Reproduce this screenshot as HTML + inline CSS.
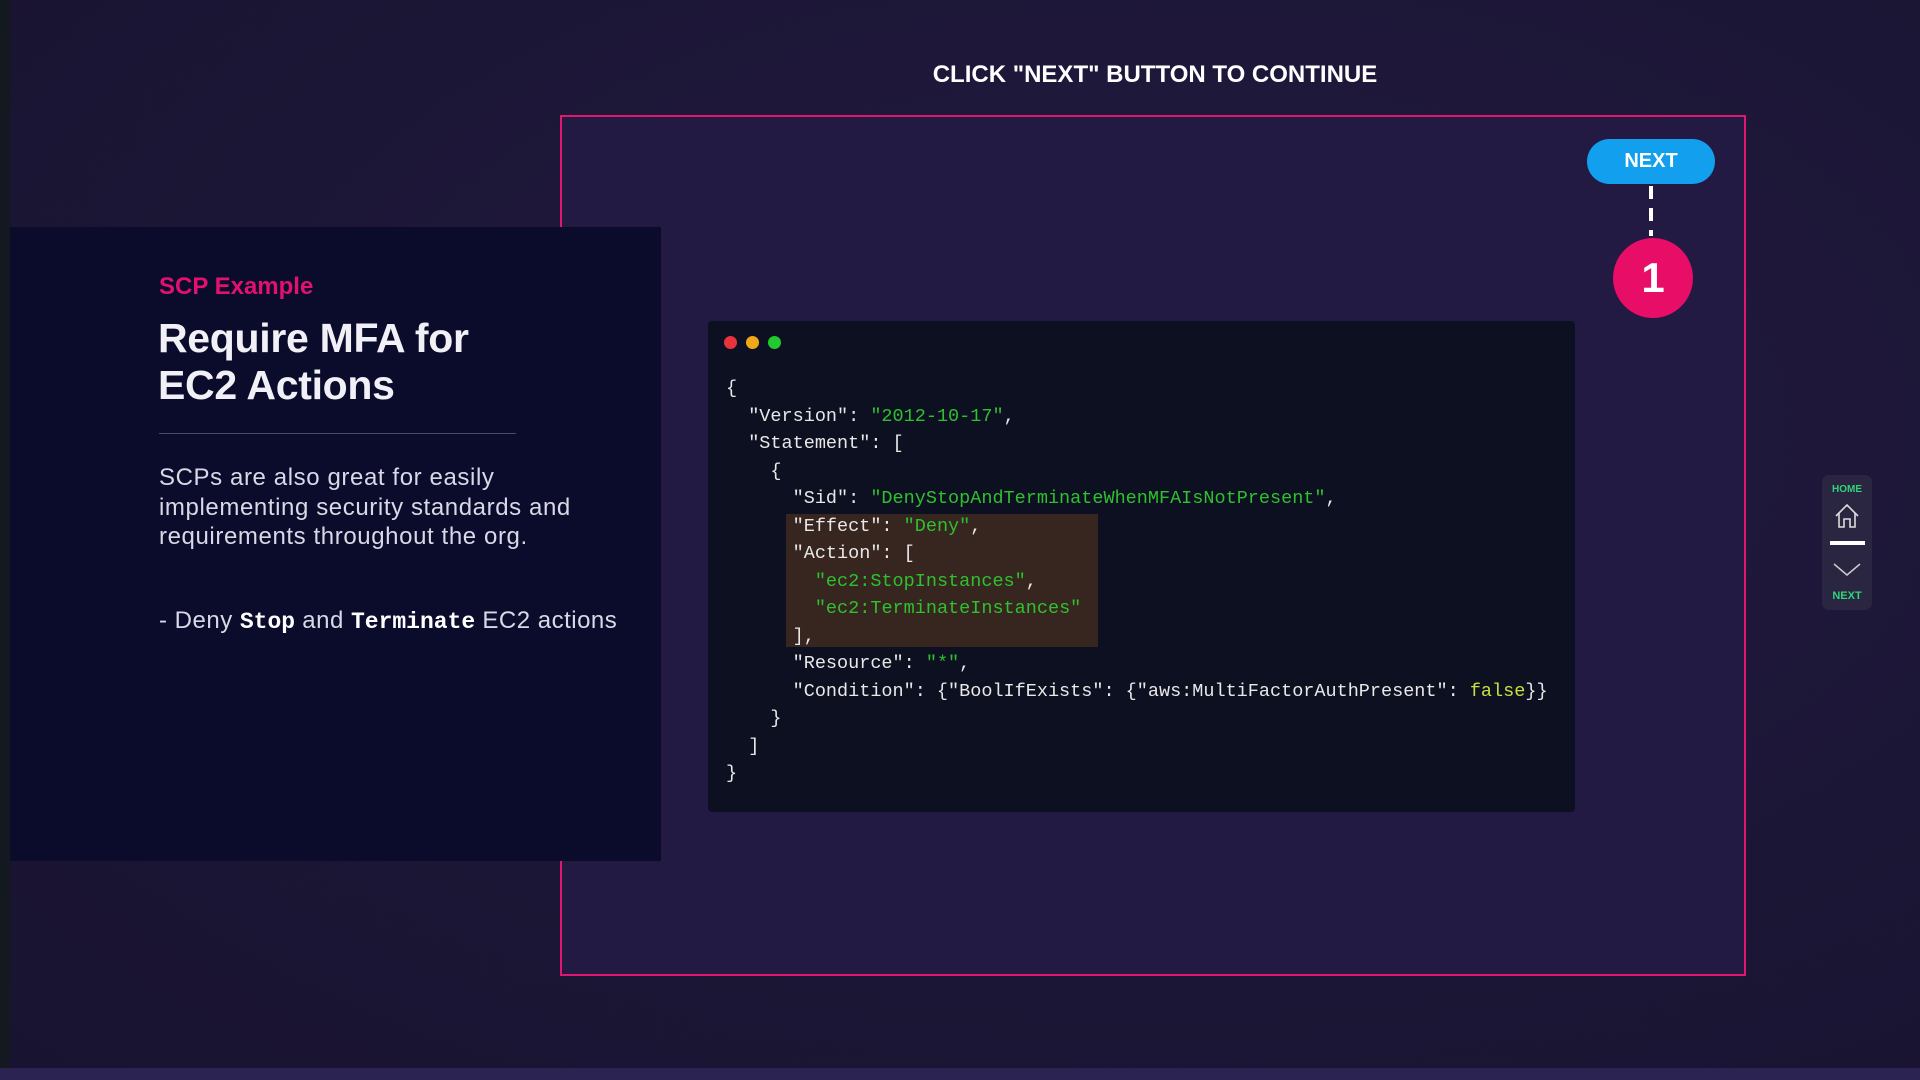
<!DOCTYPE html>
<html><head><meta charset="utf-8"><style>
*{margin:0;padding:0;box-sizing:border-box}
body{width:1920px;height:1080px;overflow:hidden;background:radial-gradient(ellipse at 60% 40%,#221a42 0%,#1c1636 60%,#181330 100%);font-family:"Liberation Sans",sans-serif;position:relative}
.abs{position:absolute}
.mono{font-family:"Liberation Mono",monospace}
.code div{height:27.5px;line-height:27.5px;white-space:pre}
.g{color:#2fc02f}
.y{color:#c8e040}
</style></head><body>
<div class="abs" style="left:0;top:0;width:10px;height:1080px;background:#141820"></div>
<div class="abs" style="left:0;top:1068px;width:1920px;height:12px;background:#2b2452"></div>
<div class="abs" style="left:0;top:61px;width:2310px;text-align:center;font-weight:bold;font-size:24px;color:#fff;letter-spacing:0px">CLICK "NEXT" BUTTON TO CONTINUE</div>
<div class="abs" style="left:560px;top:115px;width:1186px;height:861px;border:2px solid #e0166f;background:#221a42"></div>
<div class="abs" style="left:10px;top:227px;width:651px;height:634px;background:#0b0b2c"></div>
<div class="abs" style="left:159px;top:273px;font-size:24px;font-weight:bold;color:#e2106e">SCP Example</div>
<div class="abs" style="left:158px;top:315px;font-size:41px;line-height:47px;font-weight:bold;color:#f0f0f6;letter-spacing:-0.3px">Require MFA for<br>EC2 Actions</div>
<div class="abs" style="left:159px;top:433px;width:357px;height:1px;background:#4a4a70"></div>
<div class="abs" style="left:159px;top:463px;font-size:24px;line-height:29.5px;color:#d8d8e6;letter-spacing:0.6px">SCPs are also great for easily<br>implementing security standards and<br>requirements throughout the org.</div>
<div class="abs" style="left:159px;top:606px;font-size:24px;line-height:30px;color:#d8d8e6;letter-spacing:0.5px">- Deny <b class="mono" style="font-size:23px;color:#fff;letter-spacing:0">Stop</b> and <b class="mono" style="font-size:23px;color:#fff;letter-spacing:0">Terminate</b> EC2 actions</div>
<div class="abs" style="left:708px;top:321px;width:867px;height:491px;background:#0d1020;border-radius:4px"></div>
<div class="abs" style="left:724px;top:336px;width:13px;height:13px;border-radius:50%;background:#e8323c"></div>
<div class="abs" style="left:746px;top:336px;width:13px;height:13px;border-radius:50%;background:#f0a818"></div>
<div class="abs" style="left:768px;top:336px;width:13px;height:13px;border-radius:50%;background:#22c830"></div>
<div class="abs" style="left:786px;top:514px;width:312px;height:133px;background:#36261f"></div>
<div class="abs mono code" style="left:726px;top:375px;font-size:18.5px;color:#e8e8e8">
<div>{</div>
<div>  "Version": <span class="g">"2012-10-17"</span>,</div>
<div>  "Statement": [</div>
<div>    {</div>
<div>      "Sid": <span class="g">"DenyStopAndTerminateWhenMFAIsNotPresent"</span>,</div>
<div>      "Effect": <span class="g">"Deny"</span>,</div>
<div>      "Action": [</div>
<div>        <span class="g">"ec2:StopInstances"</span>,</div>
<div>        <span class="g">"ec2:TerminateInstances"</span></div>
<div>      ],</div>
<div>      "Resource": <span class="g">"*"</span>,</div>
<div>      "Condition": {"BoolIfExists": {"aws:MultiFactorAuthPresent": <span class="y">false</span>}}</div>
<div>    }</div>
<div>  ]</div>
<div>}</div>
</div>
<div class="abs" style="left:1587px;top:139px;width:128px;height:45px;border-radius:23px;background:#12a0ee;color:#fff;font-weight:bold;font-size:20px;text-align:center;line-height:45px">NEXT</div>
<svg class="abs" style="left:1648px;top:186px" width="6" height="50"><line x1="3" y1="0" x2="3" y2="50" stroke="#fff" stroke-width="4" stroke-dasharray="13 9"/></svg>
<div class="abs" style="left:1613px;top:238px;width:80px;height:80px;border-radius:50%;background:#e80d66;color:#fff;font-weight:bold;font-size:42px;text-align:center;line-height:80px">1</div>
<div class="abs" style="left:1822px;top:475px;width:50px;height:135px;border-radius:7px;background:#2a2540"></div>
<div class="abs" style="left:1822px;top:484px;width:50px;text-align:center;font-size:10px;font-weight:bold;color:#2ed47a">HOME</div>
<svg class="abs" style="left:1834px;top:503px" width="26" height="26" viewBox="0 0 26 26"><path d="M2 13 L13 2 L24 13 M5 10 V24 H10 V16 H16 V24 H21 V10" fill="none" stroke="#ddd" stroke-width="1.6"/></svg>
<div class="abs" style="left:1830px;top:541px;width:35px;height:4px;background:#fff"></div>
<svg class="abs" style="left:1833px;top:563px" width="28" height="14" viewBox="0 0 28 14"><path d="M1 1 L14 12 L27 1" fill="none" stroke="#ccc" stroke-width="1.5"/></svg>
<div class="abs" style="left:1822px;top:590px;width:50px;text-align:center;font-size:11px;font-weight:bold;color:#2ed47a">NEXT</div>
</body></html>
